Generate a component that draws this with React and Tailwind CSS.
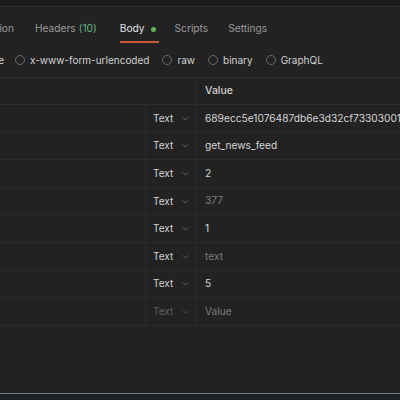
const rows = [
  { value: '689ecc5e1076487db6e3d32cf73303001a2b', dim: false },
  { value: 'get_news_feed', dim: false },
  { value: '2', dim: false },
  { value: '377', dim: true },
  { value: '1', dim: false },
  { value: 'text', dim: true },
  { value: '5', dim: false },
  { value: 'Value', dim: true, empty: true },
];

const Chevron = ({ className = '' }) => (
  <svg viewBox="0 0 12 12" className={`w-[9px] h-[9px] ${className}`} fill="none" stroke="currentColor" strokeWidth="1.2">
    <path d="M2.5 4.5 6 8l3.5-3.5" />
  </svg>
);

const Radio = ({ label }) => (
  <div className="flex items-center gap-[5px]">
    <span className="w-[10px] h-[10px] rounded-full border border-[#6a6a6a]" />
    <span>{label}</span>
  </div>
);

const Clip = ({ width, children }) => (
  <div className={`${width} overflow-hidden flex justify-end shrink-0`}>
    <span className="whitespace-nowrap">{children}</span>
  </div>
);

export default function App() {
  return (
    <div
      className="w-[400px] h-[400px] overflow-hidden bg-[#222222] text-[10px] text-[#d2d2d2] flex flex-col"
      style={{ fontFamily: 'Inter, "Noto Sans", sans-serif' }}
    >
      <div className="h-[7px] bg-[#1c1c1c] border-b border-[#2f2f2f] shrink-0" />

      <div className="h-[36px] flex items-stretch text-[10.2px] text-[#9a9a9a] shrink-0">
        <div className="flex items-center pt-[10px] border-b-2 border-transparent">
          <Clip width="w-[14px]">Authorization</Clip>
        </div>
        <div className="flex items-center pt-[10px] ml-[21px] border-b-2 border-transparent">
          Headers <span className="text-[#6cb384] ml-[3px]">(10)</span>
        </div>
        <div className="flex items-center pt-[10px] ml-[23px] border-b-2 border-[#c9583a] text-[#e4e4e4]">
          Body
          <span className="w-[5px] h-[5px] rounded-full bg-[#5cb85c] ml-[6px] mr-[3px]" />
        </div>
        <div className="flex items-center pt-[10px] ml-[16px] border-b-2 border-transparent">Scripts</div>
        <div className="flex items-center pt-[10px] ml-[20px] border-b-2 border-transparent">Settings</div>
      </div>

      <div className="h-[34px] flex items-center text-[10px] text-[#d0d0d0] shrink-0">
        <Clip width="w-[4px]">none</Clip>
        <div className="ml-[11px] flex items-center gap-[13px]">
          <Radio label="x-www-form-urlencoded" />
          <Radio label="raw" />
          <Radio label="binary" />
          <Radio label="GraphQL" />
        </div>
      </div>

      <div className="border-t border-[#2e2e2e] shrink-0">
        <div className="h-[27px] flex border-b border-[#2e2e2e]">
          <div className="w-[197px] shrink-0 border-r border-[#2e2e2e]" />
          <div className="flex items-center pl-[8px] text-[10.5px] text-[#cfcfcf] font-medium">Value</div>
        </div>
        {rows.map((row, i) => (
          <div key={i} className="h-[27.6px] flex border-b border-[#2c2c2c]">
            <div className="w-[146px] shrink-0 border-r border-[#2c2c2c]" />
            <div className="w-[51px] shrink-0 border-r border-[#2c2c2c] flex items-center justify-between pl-[7px] pr-[6px]">
              <span className={row.empty ? 'text-[#5f5f5f]' : 'text-[#d2d2d2]'}>Text</span>
              <Chevron className={row.empty ? 'text-[#4e4e4e]' : 'text-[#6e6e6e]'} />
            </div>
            <div className={`flex-1 min-w-0 overflow-hidden flex items-center pl-[8px] whitespace-nowrap text-[10.2px] ${row.dim ? 'text-[#7b7b7b]' : 'text-[#d6d6d6]'}`}>
              {row.value}
            </div>
          </div>
        ))}
      </div>

      <div className="flex-1 bg-[#222222]" />
      <div className="h-[9px] bg-[#20221f] shrink-0" />
      <div className="h-px bg-[#71757f] shrink-0" />
      <div className="h-[6px] bg-[#1d2027] shrink-0" />
    </div>
  );
}
